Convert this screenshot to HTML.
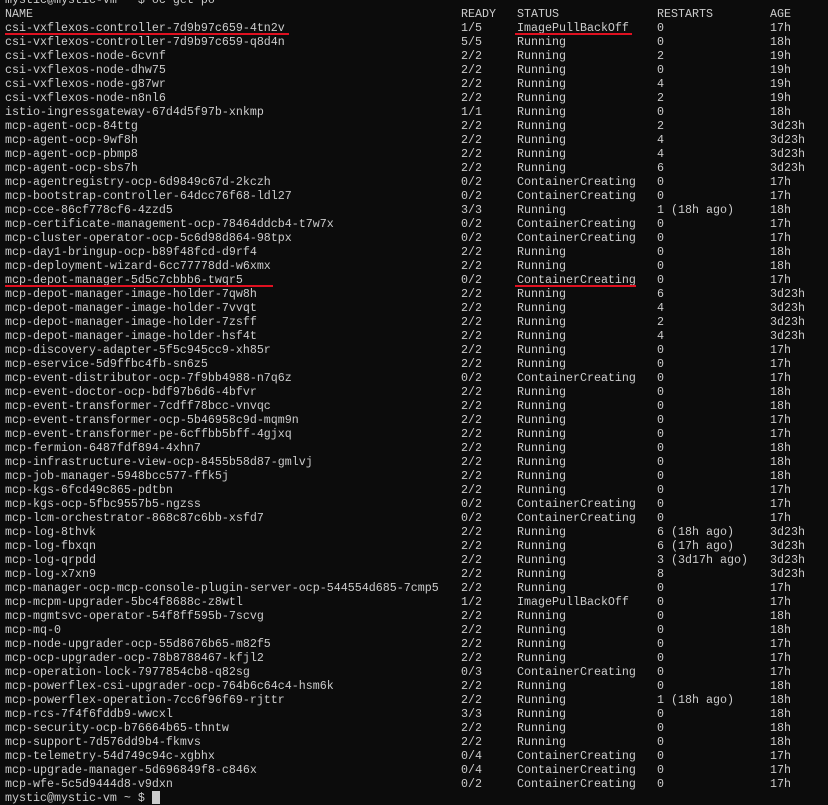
<!DOCTYPE html>
<html><head><meta charset="utf-8"><style>
html,body{margin:0;padding:0;background:#0c0c0c;width:828px;height:804px;overflow:hidden}
#t{position:absolute;left:0;top:-7px;width:828px;font-family:"Liberation Mono","DejaVu Sans Mono",monospace;font-size:11.67px;line-height:14px;color:#cccccc}
.r{position:relative;height:14px}
.r span{position:absolute;top:0;white-space:pre}
.a{left:5px}.b{left:461px}.c{left:517px}.d{left:657px}.e{left:770px}
.u{position:absolute;height:2px;background:#e01020}
.cur{position:absolute;left:152px;top:791px;width:8px;height:13px;background:#cccccc}
</style></head><body>
<div id="t"><div class="r"><span class="a">mystic@mystic-vm ~ $ oc get po</span></div><div class="r"><span class="a">NAME</span><span class="b">READY</span><span class="c">STATUS</span><span class="d">RESTARTS</span><span class="e">AGE</span></div><div class="r"><span class="a">csi-vxflexos-controller-7d9b97c659-4tn2v</span><span class="b">1/5</span><span class="c">ImagePullBackOff</span><span class="d">0</span><span class="e">17h</span></div><div class="r"><span class="a">csi-vxflexos-controller-7d9b97c659-q8d4n</span><span class="b">5/5</span><span class="c">Running</span><span class="d">0</span><span class="e">18h</span></div><div class="r"><span class="a">csi-vxflexos-node-6cvnf</span><span class="b">2/2</span><span class="c">Running</span><span class="d">2</span><span class="e">19h</span></div><div class="r"><span class="a">csi-vxflexos-node-dhw75</span><span class="b">2/2</span><span class="c">Running</span><span class="d">0</span><span class="e">19h</span></div><div class="r"><span class="a">csi-vxflexos-node-g87wr</span><span class="b">2/2</span><span class="c">Running</span><span class="d">4</span><span class="e">19h</span></div><div class="r"><span class="a">csi-vxflexos-node-n8nl6</span><span class="b">2/2</span><span class="c">Running</span><span class="d">2</span><span class="e">19h</span></div><div class="r"><span class="a">istio-ingressgateway-67d4d5f97b-xnkmp</span><span class="b">1/1</span><span class="c">Running</span><span class="d">0</span><span class="e">18h</span></div><div class="r"><span class="a">mcp-agent-ocp-84ttg</span><span class="b">2/2</span><span class="c">Running</span><span class="d">2</span><span class="e">3d23h</span></div><div class="r"><span class="a">mcp-agent-ocp-9wf8h</span><span class="b">2/2</span><span class="c">Running</span><span class="d">4</span><span class="e">3d23h</span></div><div class="r"><span class="a">mcp-agent-ocp-pbmp8</span><span class="b">2/2</span><span class="c">Running</span><span class="d">4</span><span class="e">3d23h</span></div><div class="r"><span class="a">mcp-agent-ocp-sbs7h</span><span class="b">2/2</span><span class="c">Running</span><span class="d">6</span><span class="e">3d23h</span></div><div class="r"><span class="a">mcp-agentregistry-ocp-6d9849c67d-2kczh</span><span class="b">0/2</span><span class="c">ContainerCreating</span><span class="d">0</span><span class="e">17h</span></div><div class="r"><span class="a">mcp-bootstrap-controller-64dcc76f68-ldl27</span><span class="b">0/2</span><span class="c">ContainerCreating</span><span class="d">0</span><span class="e">17h</span></div><div class="r"><span class="a">mcp-cce-86cf778cf6-4zzd5</span><span class="b">3/3</span><span class="c">Running</span><span class="d">1 (18h ago)</span><span class="e">18h</span></div><div class="r"><span class="a">mcp-certificate-management-ocp-78464ddcb4-t7w7x</span><span class="b">0/2</span><span class="c">ContainerCreating</span><span class="d">0</span><span class="e">17h</span></div><div class="r"><span class="a">mcp-cluster-operator-ocp-5c6d98d864-98tpx</span><span class="b">0/2</span><span class="c">ContainerCreating</span><span class="d">0</span><span class="e">17h</span></div><div class="r"><span class="a">mcp-day1-bringup-ocp-b89f48fcd-d9rf4</span><span class="b">2/2</span><span class="c">Running</span><span class="d">0</span><span class="e">18h</span></div><div class="r"><span class="a">mcp-deployment-wizard-6cc77778dd-w6xmx</span><span class="b">2/2</span><span class="c">Running</span><span class="d">0</span><span class="e">18h</span></div><div class="r"><span class="a">mcp-depot-manager-5d5c7cbbb6-twqr5</span><span class="b">0/2</span><span class="c">ContainerCreating</span><span class="d">0</span><span class="e">17h</span></div><div class="r"><span class="a">mcp-depot-manager-image-holder-7qw8h</span><span class="b">2/2</span><span class="c">Running</span><span class="d">6</span><span class="e">3d23h</span></div><div class="r"><span class="a">mcp-depot-manager-image-holder-7vvqt</span><span class="b">2/2</span><span class="c">Running</span><span class="d">4</span><span class="e">3d23h</span></div><div class="r"><span class="a">mcp-depot-manager-image-holder-7zsff</span><span class="b">2/2</span><span class="c">Running</span><span class="d">2</span><span class="e">3d23h</span></div><div class="r"><span class="a">mcp-depot-manager-image-holder-hsf4t</span><span class="b">2/2</span><span class="c">Running</span><span class="d">4</span><span class="e">3d23h</span></div><div class="r"><span class="a">mcp-discovery-adapter-5f5c945cc9-xh85r</span><span class="b">2/2</span><span class="c">Running</span><span class="d">0</span><span class="e">17h</span></div><div class="r"><span class="a">mcp-eservice-5d9ffbc4fb-sn6z5</span><span class="b">2/2</span><span class="c">Running</span><span class="d">0</span><span class="e">17h</span></div><div class="r"><span class="a">mcp-event-distributor-ocp-7f9bb4988-n7q6z</span><span class="b">0/2</span><span class="c">ContainerCreating</span><span class="d">0</span><span class="e">17h</span></div><div class="r"><span class="a">mcp-event-doctor-ocp-bdf97b6d6-4bfvr</span><span class="b">2/2</span><span class="c">Running</span><span class="d">0</span><span class="e">18h</span></div><div class="r"><span class="a">mcp-event-transformer-7cdff78bcc-vnvqc</span><span class="b">2/2</span><span class="c">Running</span><span class="d">0</span><span class="e">18h</span></div><div class="r"><span class="a">mcp-event-transformer-ocp-5b46958c9d-mqm9n</span><span class="b">2/2</span><span class="c">Running</span><span class="d">0</span><span class="e">17h</span></div><div class="r"><span class="a">mcp-event-transformer-pe-6cffbb5bff-4gjxq</span><span class="b">2/2</span><span class="c">Running</span><span class="d">0</span><span class="e">17h</span></div><div class="r"><span class="a">mcp-fermion-6487fdf894-4xhn7</span><span class="b">2/2</span><span class="c">Running</span><span class="d">0</span><span class="e">18h</span></div><div class="r"><span class="a">mcp-infrastructure-view-ocp-8455b58d87-gmlvj</span><span class="b">2/2</span><span class="c">Running</span><span class="d">0</span><span class="e">18h</span></div><div class="r"><span class="a">mcp-job-manager-5948bcc577-ffk5j</span><span class="b">2/2</span><span class="c">Running</span><span class="d">0</span><span class="e">18h</span></div><div class="r"><span class="a">mcp-kgs-6fcd49c865-pdtbn</span><span class="b">2/2</span><span class="c">Running</span><span class="d">0</span><span class="e">17h</span></div><div class="r"><span class="a">mcp-kgs-ocp-5fbc9557b5-ngzss</span><span class="b">0/2</span><span class="c">ContainerCreating</span><span class="d">0</span><span class="e">17h</span></div><div class="r"><span class="a">mcp-lcm-orchestrator-868c87c6bb-xsfd7</span><span class="b">0/2</span><span class="c">ContainerCreating</span><span class="d">0</span><span class="e">17h</span></div><div class="r"><span class="a">mcp-log-8thvk</span><span class="b">2/2</span><span class="c">Running</span><span class="d">6 (18h ago)</span><span class="e">3d23h</span></div><div class="r"><span class="a">mcp-log-fbxqn</span><span class="b">2/2</span><span class="c">Running</span><span class="d">6 (17h ago)</span><span class="e">3d23h</span></div><div class="r"><span class="a">mcp-log-qrpdd</span><span class="b">2/2</span><span class="c">Running</span><span class="d">3 (3d17h ago)</span><span class="e">3d23h</span></div><div class="r"><span class="a">mcp-log-x7xn9</span><span class="b">2/2</span><span class="c">Running</span><span class="d">8</span><span class="e">3d23h</span></div><div class="r"><span class="a">mcp-manager-ocp-mcp-console-plugin-server-ocp-544554d685-7cmp5</span><span class="b">2/2</span><span class="c">Running</span><span class="d">0</span><span class="e">17h</span></div><div class="r"><span class="a">mcp-mcpm-upgrader-5bc4f8688c-z8wtl</span><span class="b">1/2</span><span class="c">ImagePullBackOff</span><span class="d">0</span><span class="e">17h</span></div><div class="r"><span class="a">mcp-mgmtsvc-operator-54f8ff595b-7scvg</span><span class="b">2/2</span><span class="c">Running</span><span class="d">0</span><span class="e">18h</span></div><div class="r"><span class="a">mcp-mq-0</span><span class="b">2/2</span><span class="c">Running</span><span class="d">0</span><span class="e">18h</span></div><div class="r"><span class="a">mcp-node-upgrader-ocp-55d8676b65-m82f5</span><span class="b">2/2</span><span class="c">Running</span><span class="d">0</span><span class="e">17h</span></div><div class="r"><span class="a">mcp-ocp-upgrader-ocp-78b8788467-kfjl2</span><span class="b">2/2</span><span class="c">Running</span><span class="d">0</span><span class="e">17h</span></div><div class="r"><span class="a">mcp-operation-lock-7977854cb8-q82sg</span><span class="b">0/3</span><span class="c">ContainerCreating</span><span class="d">0</span><span class="e">17h</span></div><div class="r"><span class="a">mcp-powerflex-csi-upgrader-ocp-764b6c64c4-hsm6k</span><span class="b">2/2</span><span class="c">Running</span><span class="d">0</span><span class="e">18h</span></div><div class="r"><span class="a">mcp-powerflex-operation-7cc6f96f69-rjttr</span><span class="b">2/2</span><span class="c">Running</span><span class="d">1 (18h ago)</span><span class="e">18h</span></div><div class="r"><span class="a">mcp-rcs-7f4f6fddb9-wwcxl</span><span class="b">3/3</span><span class="c">Running</span><span class="d">0</span><span class="e">18h</span></div><div class="r"><span class="a">mcp-security-ocp-b76664b65-thntw</span><span class="b">2/2</span><span class="c">Running</span><span class="d">0</span><span class="e">18h</span></div><div class="r"><span class="a">mcp-support-7d576dd9b4-fkmvs</span><span class="b">2/2</span><span class="c">Running</span><span class="d">0</span><span class="e">18h</span></div><div class="r"><span class="a">mcp-telemetry-54d749c94c-xgbhx</span><span class="b">0/4</span><span class="c">ContainerCreating</span><span class="d">0</span><span class="e">17h</span></div><div class="r"><span class="a">mcp-upgrade-manager-5d696849f8-c846x</span><span class="b">0/4</span><span class="c">ContainerCreating</span><span class="d">0</span><span class="e">17h</span></div><div class="r"><span class="a">mcp-wfe-5c5d9444d8-v9dxn</span><span class="b">0/2</span><span class="c">ContainerCreating</span><span class="d">0</span><span class="e">17h</span></div><div class="r"><span class="a">mystic@mystic-vm ~ $ </span></div></div>
<div class="u" style="left:5px;top:33px;width:284px"></div>
<div class="u" style="left:515px;top:33px;width:117px"></div>
<div class="u" style="left:5px;top:285px;width:268px"></div>
<div class="u" style="left:515px;top:285px;width:121px"></div>
<div class="cur"></div>
</body></html>
